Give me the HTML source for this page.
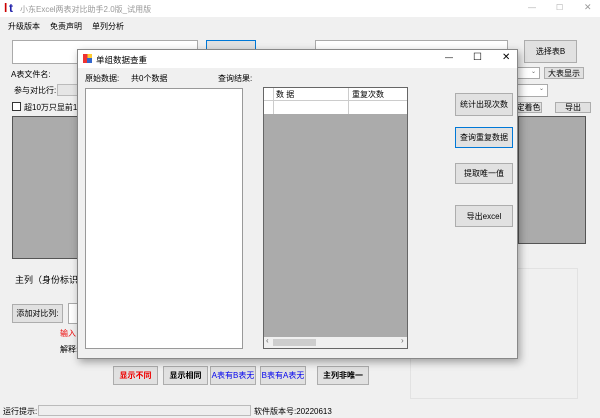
<!DOCTYPE html>
<html><head><meta charset="utf-8"><style>
*{margin:0;padding:0;box-sizing:border-box}
body{width:600px;height:418px;background:#f0f0f0;font-family:"Liberation Sans","Noto Sans CJK SC",sans-serif;font-size:8px;color:#000;position:relative;overflow:hidden}
.a{position:absolute;white-space:nowrap}
.btn{position:absolute;background:#e1e1e1;border:1px solid #adadad;display:flex;align-items:center;justify-content:center;font-size:8px}
.tb{position:absolute;background:#fff;border:1px solid #7a7a7a}
.gray{position:absolute;background:#ababab;border:1px solid #555}
</style></head><body>
<div class="a" style="left:0;top:0;width:600px;height:17px;background:#fff"></div>
<div class="a" style="left:4px;top:1px;font-weight:bold;font-size:12px;line-height:14px;color:#c00">l</div>
<div class="a" style="left:9px;top:1px;font-weight:bold;font-size:12px;line-height:14px;color:#22a">t</div>
<div class="a" style="left:20px;top:4px;color:#999">小东Excel两表对比助手2.0版_试用版</div>
<div class="a" style="left:528px;top:3px;color:#aaa">—</div>
<div class="a" style="left:556px;top:3px;color:#aaa">☐</div>
<div class="a" style="left:584px;top:2px;color:#999;font-size:9px">✕</div>
<div class="a" style="left:8px;top:21px">升级版本</div>
<div class="a" style="left:50px;top:21px">免责声明</div>
<div class="a" style="left:92px;top:21px">单列分析</div>
<div class="tb" style="left:12px;top:40px;width:186px;height:24px;border-color:#aaa"></div>
<div class="btn" style="left:206px;top:40px;width:50px;height:24px;border:1px solid #0078d7"></div>
<div class="tb" style="left:315px;top:40px;width:193px;height:24px;border-color:#aaa"></div>
<div class="btn" style="left:524px;top:40px;width:53px;height:23px">选择表B</div>
<div class="a" style="left:11px;top:69px">A表文件名:</div>
<div class="tb" style="left:510px;top:67px;width:30px;height:12px;border-color:#aaa;font-size:6px;text-align:right;padding-right:3px;color:#666">⌄</div>
<div class="btn" style="left:544px;top:67px;width:40px;height:12px">大表显示</div>
<div class="a" style="left:14px;top:85px">参与对比行:</div>
<div class="tb" style="left:57px;top:84px;width:30px;height:12px;background:#e6e6e6;border-color:#bbb"></div>
<div class="tb" style="left:510px;top:84px;width:38px;height:13px;border-color:#aaa;font-size:6px;text-align:right;padding-right:3px;color:#666">⌄</div>
<div class="tb" style="left:12px;top:102px;width:9px;height:9px;border-color:#333"></div>
<div class="a" style="left:24px;top:102px">超10万只显前100</div>
<div class="btn" style="left:515px;top:102px;width:27px;height:11px">定着色</div>
<div class="btn" style="left:555px;top:102px;width:36px;height:11px">导出</div>
<div class="gray" style="left:12px;top:116px;width:70px;height:143px"></div>
<div class="gray" style="left:518px;top:116px;width:68px;height:128px"></div>
<div class="a" style="left:15px;top:273px;font-size:9px">主列（身份标识）</div>
<div class="btn" style="left:12px;top:304px;width:51px;height:19px">添加对比列:</div>
<div class="tb" style="left:68px;top:303px;width:20px;height:21px;border-color:#aaa"></div>
<div class="a" style="left:60px;top:328px;color:#e00">输入</div>
<div class="a" style="left:60px;top:344px">解释:</div>
<div class="btn" style="left:113px;top:366px;width:45px;height:19px;color:#e00;font-weight:bold">显示不同</div>
<div class="btn" style="left:163px;top:366px;width:45px;height:19px;font-weight:bold">显示相同</div>
<div class="btn" style="left:210px;top:366px;width:46px;height:19px;color:#00e">A表有B表无</div>
<div class="btn" style="left:260px;top:366px;width:46px;height:19px;color:#00e">B表有A表无</div>
<div class="btn" style="left:317px;top:366px;width:52px;height:19px;font-weight:bold">主列非唯一</div>
<div class="a" style="left:410px;top:268px;width:168px;height:131px;border:1px solid #e2e2e2"></div>
<div class="a" style="left:3px;top:406px">运行提示:</div>
<div class="tb" style="left:38px;top:405px;width:213px;height:11px;background:#eee;border-color:#bbb"></div>
<div class="a" style="left:254px;top:406px">软件版本号:20220613</div>

<div class="a" style="left:77px;top:49px;width:441px;height:310px;background:#f0f0f0;border:1px solid #888;box-shadow:2px 3px 8px rgba(0,0,0,.35)"></div>
<div class="a" style="left:78px;top:50px;width:439px;height:18px;background:#fff"></div>
<div class="a" style="left:83px;top:54px;width:9px;height:9px;background:linear-gradient(90deg,#e33 50%,#fc3 50%)"><div style="position:absolute;left:4px;top:4px;width:5px;height:5px;background:#36c"></div></div>
<div class="a" style="left:96px;top:54px;font-size:8.5px">单组数据查重</div>
<div class="a" style="left:445px;top:53px">—</div>
<div class="a" style="left:473px;top:52px;font-size:10px">☐</div>
<div class="a" style="left:502px;top:52px;font-size:10px">✕</div>
<div class="a" style="left:85px;top:73px">原始数据:</div>
<div class="a" style="left:131px;top:73px">共0个数据</div>
<div class="a" style="left:218px;top:73px">查询结果:</div>
<div class="tb" style="left:85px;top:88px;width:158px;height:261px;border-color:#999"></div>
<div class="gray" style="left:263px;top:87px;width:145px;height:262px;border-color:#666"></div>
<div class="a" style="left:264px;top:88px;width:143px;height:26px;background:#fff"></div>
<div class="a" style="left:264px;top:100px;width:143px;height:1px;background:#ccc"></div>
<div class="a" style="left:273px;top:88px;width:1px;height:26px;background:#ccc"></div>
<div class="a" style="left:348px;top:88px;width:1px;height:26px;background:#ccc"></div>
<div class="a" style="left:276px;top:89px">数 据</div>
<div class="a" style="left:352px;top:89px">重复次数</div>
<div class="a" style="left:264px;top:337px;width:143px;height:11px;background:#f0f0f0"></div>
<div class="a" style="left:273px;top:339px;width:43px;height:7px;background:#cdcdcd"></div>
<div class="a" style="left:266px;top:336px;font-size:8px;color:#666">‹</div>
<div class="a" style="left:401px;top:336px;font-size:8px;color:#666">›</div>
<div class="btn" style="left:455px;top:93px;width:58px;height:23px">统计出现次数</div>
<div class="btn" style="left:455px;top:127px;width:58px;height:21px;border:1px solid #0078d7">查询重复数据</div>
<div class="btn" style="left:455px;top:163px;width:58px;height:21px">提取唯一值</div>
<div class="btn" style="left:455px;top:205px;width:58px;height:22px">导出excel</div>
</body></html>
